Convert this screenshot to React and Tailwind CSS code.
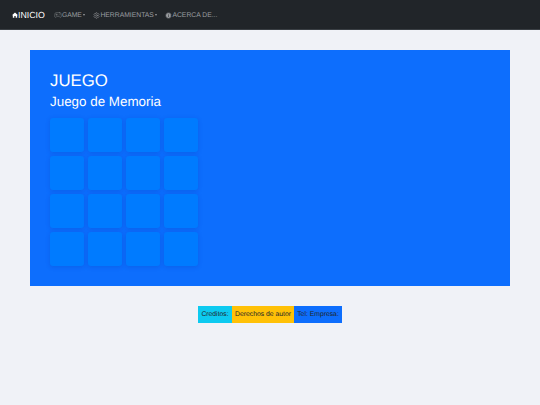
import { Gamepad2, Settings, Info } from 'lucide-react';

function Caret() {
  return <span className="ml-[1.5px] inline-block w-0 h-0 border-x-[1.5px] border-x-transparent border-t-[2px] border-t-[#9a9da0]" />;
}

function HomeIcon() {
  return (
    <svg viewBox="0 0 16 16" className="w-[6px] h-[6px] fill-white">
      <path d="M8 1 0 8.5h2.2V15h4v-4.5h3.6V15h4V8.5H16z" />
    </svg>
  );
}

export default function App() {
  const cells = Array.from({ length: 16 });

  return (
    <div className="min-h-[405px] bg-[#f0f2f7] font-['Liberation_Sans',Arial,sans-serif] [text-rendering:geometricPrecision]">
      {/* Navbar */}
      <nav className="h-[30px] bg-[#212529] border-b border-[#3a3f44] flex items-center pl-3 pt-[1px] text-[6.8px] leading-[10px] text-[#9a9da0]">
        <a className="flex items-center text-[8.8px] leading-[10px] text-white mr-[9px]">
          <HomeIcon />
          INICIO
        </a>
        <a className="flex items-center mr-[8px]">
          <Gamepad2 className="w-[8px] h-[8px]" strokeWidth={1.25} />
          <span className="pt-[1px] leading-[10px]">GAME</span>
          <Caret />
        </a>
        <a className="flex items-center mr-[8px]">
          <Settings className="w-[7px] h-[7px]" strokeWidth={1.75} />
          <span className="pt-[1px] leading-[10px]">HERRAMIENTAS</span>
          <Caret />
        </a>
        <a className="flex items-center">
          <Info className="w-[7px] h-[7px] fill-[#9a9da0] stroke-[#212529]" strokeWidth={2} />
          <span className="pt-[1px] leading-[10px]">ACERCA DE...</span>
        </a>
      </nav>

      {/* Juego */}
      <main className="pt-5 px-[30px]">
        <section className="h-[236px] bg-[#0d6efd] pt-5 pl-5 text-white">
          <h1 className="text-[16.8px] leading-[20px] pt-[1px]">JUEGO</h1>
          <h2 className="text-[13.4px] leading-[17px] mt-[2px]">Juego de Memoria</h2>
          <div className="mt-[8px] grid grid-cols-[repeat(4,34px)] gap-1">
            {cells.map((_, i) => (
              <div key={i} className="h-[34px] rounded-[3px] bg-[#007bff] shadow-[0_1px_4px_rgba(0,60,180,0.25)]" />
            ))}
          </div>
        </section>
      </main>

      {/* Footer */}
      <footer className="mt-5 flex justify-center text-[6.8px] leading-[17px] text-[#212529]">
        <span className="h-[17px] w-[34px] text-center bg-[#0dcaf0]">Creditos:</span>
        <span className="h-[17px] w-[62px] text-center bg-[#ffc107]">Derechos de autor</span>
        <span className="h-[17px] w-[48px] text-center bg-[#0d6efd]">Tel: Empresa:</span>
      </footer>
    </div>
  );
}
